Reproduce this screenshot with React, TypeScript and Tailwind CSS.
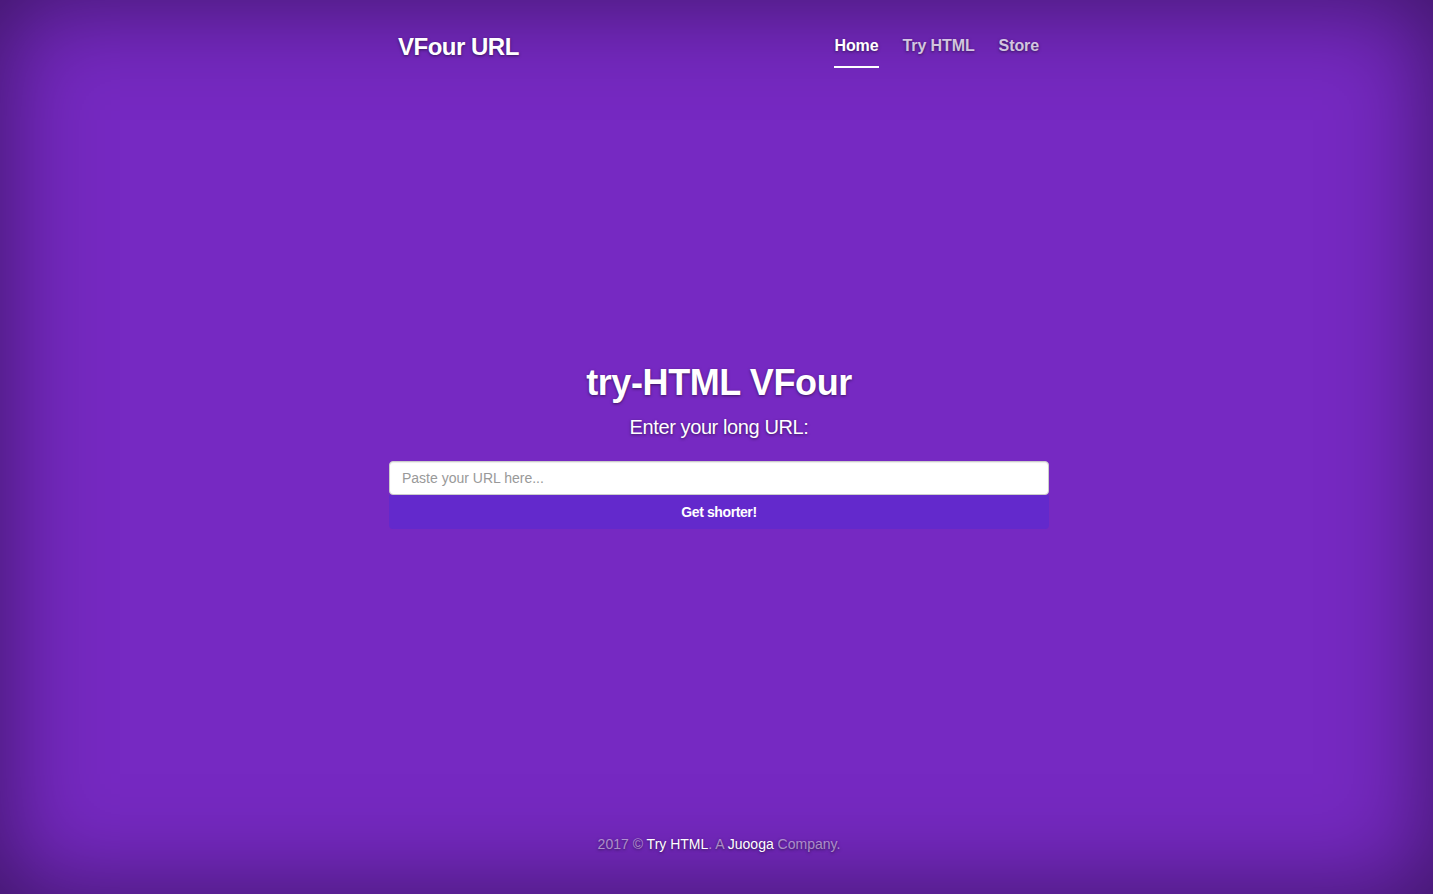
export default function App() {
  const shadow = '[text-shadow:0_1px_3px_rgba(0,0,0,0.5)]'

  return (
    <div
      className={`flex h-screen flex-col bg-[#7629c2] pl-[5px] text-white shadow-[inset_0_0_100px_rgba(0,0,0,0.5)] font-['Liberation_Sans',Arial,sans-serif] ${shadow}`}
    >
      {/* Masthead */}
      <header className="h-[100px] shrink-0">
        <div className="mx-auto flex w-[660px] items-start justify-between pl-[9px] pr-[10px] pt-[34px]">
          <h3 className="text-[24px] font-bold leading-[26px] tracking-[-0.5px]">VFour URL</h3>
          <nav className="flex gap-[24px]">
            <a className="border-b-2 border-white pb-[8px] text-[16px] font-bold leading-[24px] tracking-[-0.1px] text-white" href="#">
              Home
            </a>
            <a className="border-b-2 border-transparent pb-[8px] text-[16px] font-bold leading-[24px] tracking-[-0.1px] text-white/75" href="#">
              Try HTML
            </a>
            <a className="border-b-2 border-transparent pb-[8px] text-[16px] font-bold leading-[24px] tracking-[-0.1px] text-white/75" href="#">
              Store
            </a>
          </nav>
        </div>
      </header>

      {/* Cover */}
      <main className="flex flex-1 items-center justify-center">
        <div className="-mt-[2px] flex w-[660px] flex-col items-center">
          <h1 className="text-[36px] font-bold leading-[40px] tracking-[-0.4px]">try-HTML VFour</h1>
          <p className="mt-[10px] text-[20px] font-light leading-[28px] tracking-[-0.4px]">Enter your long URL:</p>
          <form className="mt-[20px] flex w-full flex-col" onSubmit={(e) => e.preventDefault()}>
            <input
              type="text"
              placeholder="Paste your URL here..."
              className="h-[34px] w-full rounded-[4px] border border-[#ccc] bg-white px-[12px] text-[14px] text-[#555] shadow-[inset_0_1px_1px_rgba(0,0,0,0.075)] outline-none placeholder:text-[#999] [text-shadow:none]"
            />
            <button
              type="submit"
              className="h-[34px] w-full rounded-b-[4px] bg-[#6329cc] text-[14px] font-bold tracking-[-0.4px] text-white [text-shadow:none]"
            >
              Get shorter!
            </button>
          </form>
        </div>
      </main>

      {/* Footer */}
      <footer className="flex h-[100px] shrink-0 items-center justify-center">
        <p className="text-[14px] leading-[20px] text-white/50">
          2017 © <a href="#" className="text-white">Try HTML</a>. A <a href="#" className="text-white">Juooga</a> Company.
        </p>
      </footer>
    </div>
  )
}
